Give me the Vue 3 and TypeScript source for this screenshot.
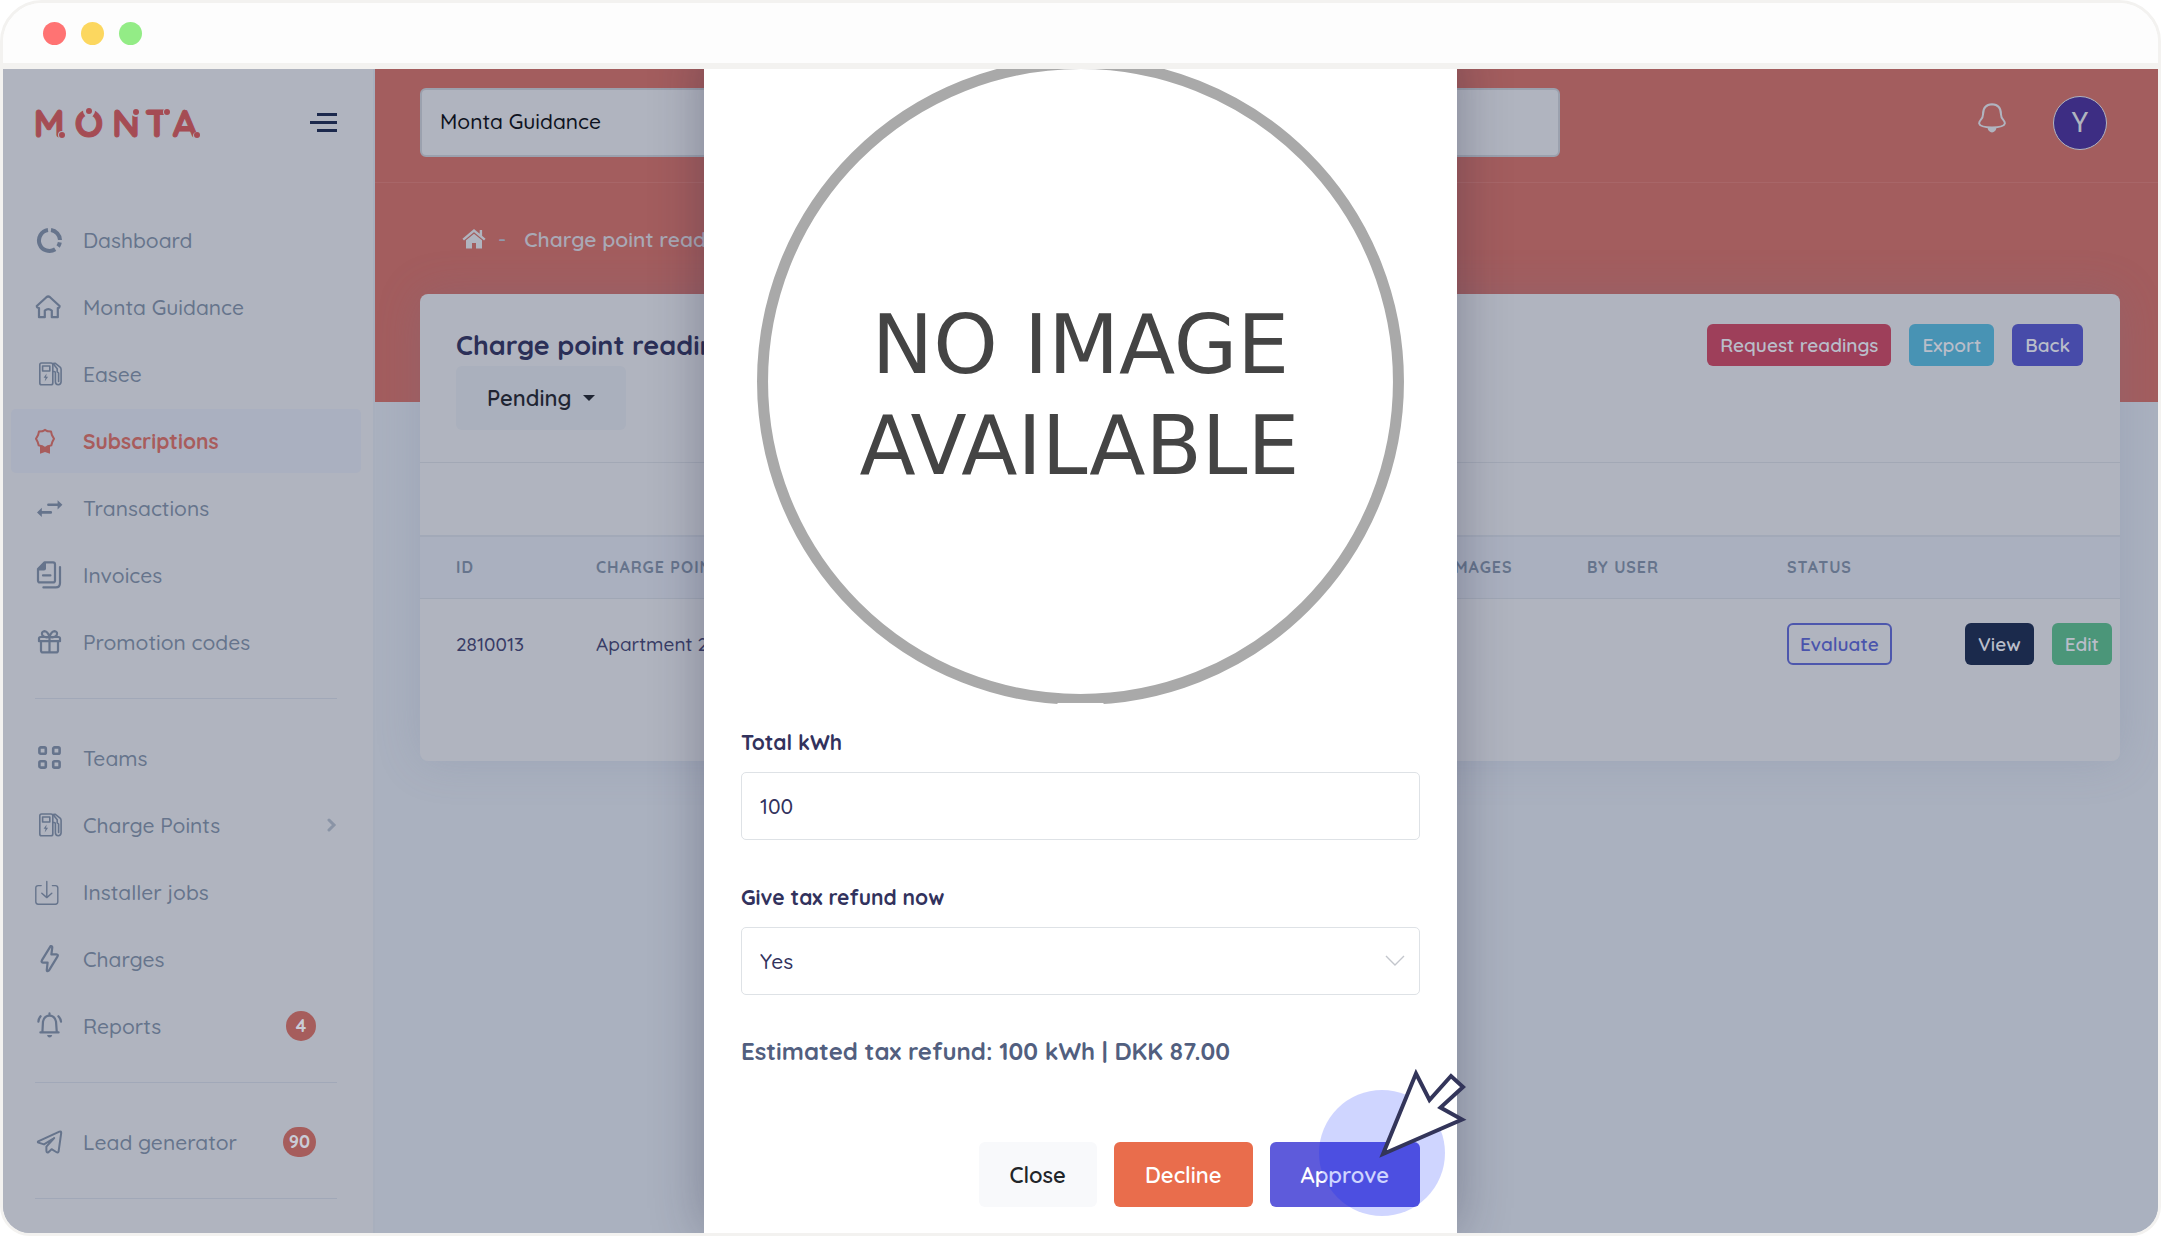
<script setup lang="ts">
import { ref } from 'vue'

interface NavItem {
  label: string
  icon: string
  active?: boolean
  badge?: number
  expandable?: boolean
}

const charger =
  '<rect x="4.8" y="3" width="13" height="21.8" rx="1.8"/><rect x="7.6" y="6" width="7.2" height="5"/>' +
  '<path d="M11.6 13.6 8.6 17.8h2l-.9 3.6 3.4-4.6h-2z" fill="currentColor" stroke="none"/>' +
  '<path d="M17.8 11.5h1.4q1.2 0 1.2 1.6v8.7q0 2.9 2.8 2.9t2.9-2.9V9.4q0-1.3-1-2.2L20 3.2l-2 .4 4.2 5.2v3l1.4 1.2v8.4"/>'

const icons: Record<string, string> = {
  dashboard:
    '<path stroke-width="4" stroke-linecap="butt" d="M16 4.1A10.5 10.5 0 0 1 25 14M24.8 16.3A10.5 10.5 0 0 1 23.1 20.5M20.2 23.3A10.5 10.5 0 1 1 13 4.1"/>',
  home:
    '<path stroke-width="2.2" d="M1.8 13 11.4 4.2Q13.2 2.8 15 4.2L24.6 13Q24.6 15 22.8 15V24.2H16.8V17.6Q13.2 14.8 9.8 17.6V24.2H4V15Q1.8 15 1.8 13Z"/>',
  charger,
  ribbon:
    '<path stroke-width="2" d="M10 2.8 12.6 4.3 16 4.6 16.9 8 19 11.8 17.3 15 16.3 18.4 13 19.2 10 21 7 19.2 3.7 18.4 2.7 15 1 11.8 3.1 8 4 4.6 7.4 4.3Z"/><path stroke="none" fill="currentColor" d="M5 18.6q5 3 10 0v8.2l-5-1.8-5 1.8z"/>',
  transfer:
    '<path stroke-width="2.6" d="M13.4 10.8H24M5 18.4H15.8"/><path stroke="none" fill="currentColor" d="M22.6 6.2 27.4 10.8 22.6 15.4ZM6.8 13.8 2 18.4 6.8 23Z"/>',
  invoice:
    '<path stroke-width="2.2" d="M9.6 1.4H18Q20 1.4 20 3.4V19.4Q20 21.4 18 21.4H5Q3 21.4 3 19.4V8ZM8 14.4H15.4M25 6V22Q25 26.4 20.8 26.4H8.4"/><path stroke="none" fill="currentColor" d="M3 9.6V7.4L9 1.4H11V7.6Q11 9.6 9 9.6Z"/>',
  gift:
    '<path stroke-width="2.2" d="M5.6 9H23.4Q25 9 25 10.6V13.2H4V10.6Q4 9 5.6 9ZM6 13.4V22.4Q6 24.4 8 24.4H21Q23 24.4 23 22.4V13.4M14.5 9V24.4M14.5 9Q9 10 7.4 7.4 6 4 9 3.2 12.6 3 14.5 9 16.4 3 20 3.2 23 4 21.6 7.4 20 10 14.5 9"/>',
  grid:
    '<g stroke-width="2.6"><rect x="4.4" y="3.4" width="6.4" height="6.4" rx="1.4"/><rect x="18.2" y="3.4" width="6.4" height="6.4" rx="1.4"/><rect x="4.4" y="17.2" width="6.4" height="6.4" rx="1.4"/><rect x="18.2" y="17.2" width="6.4" height="6.4" rx="1.4"/></g>',
  install:
    '<path stroke-width="1.4" d="M6.2 7.6H3.2Q.8 7.6 .8 10V23.8Q.8 26.2 3.2 26.2H20.4Q22.8 26.2 22.8 23.8V10Q22.8 7.6 20.4 7.6H17.4M11.8 3.4V19.4M6.8 15.2 11.8 19.6 16.8 15.2"/>',
  bolt:
    '<path stroke-width="2.2" d="M15.6 1.2Q17.6.8 17.2 3L16.4 9.4H21.4Q23.6 9.6 22.4 11.6L14 25.4Q11.6 27.2 11.8 24.8L12.6 17.6H8Q5.8 17.4 7 15.2Z"/>',
  alarm:
    '<path stroke-width="2.2" d="M7.4 20.4 8 9.4Q9.4 3.6 14.5 3.6T21 9.4L21.8 20.4M5.4 20.4H23.6M14.5 1.4V3.4M5.6 4.2Q3.6 6.4 3.4 9.6M23.4 4.2Q25.6 6.4 26 9.6"/><path stroke="none" fill="currentColor" d="M12 23H17.2Q16.6 25.6 14.6 25.6T12 23Z"/>',
  plane:
    '<path stroke-width="2" d="M3.2 13.4 24.4 3.6Q26.4 3 26.2 5L23.6 23.4Q23 25.2 21.2 24L16.6 21.2 13.4 24.2Q11.4 25 11.4 22.6V18.6L19.2 10 9 16.4 3.4 14.6Q2.4 14 3.2 13.4Z"/>',
}

const groups: NavItem[][] = [
  [
    { label: 'Dashboard', icon: 'dashboard' },
    { label: 'Monta Guidance', icon: 'home' },
    { label: 'Easee', icon: 'charger' },
    { label: 'Subscriptions', icon: 'ribbon', active: true },
    { label: 'Transactions', icon: 'transfer' },
    { label: 'Invoices', icon: 'invoice' },
    { label: 'Promotion codes', icon: 'gift' },
  ],
  [
    { label: 'Teams', icon: 'grid' },
    { label: 'Charge Points', icon: 'charger', expandable: true },
    { label: 'Installer jobs', icon: 'install' },
    { label: 'Charges', icon: 'bolt' },
    { label: 'Reports', icon: 'alarm', badge: 4 },
  ],
  [{ label: 'Lead generator', icon: 'plane', badge: 90 }],
]

const search = ref('Monta Guidance')
const totalKwh = ref('100')
const refund = ref('Yes')
</script>

<template>
  <div class="window">
    <div class="titlebar">
      <span class="dot red"></span>
      <span class="dot yellow"></span>
      <span class="dot green"></span>
    </div>

    <div class="app">
      <aside class="sidebar">
        <div class="brand">
          <svg class="logo" width="176" height="56" viewBox="-3 -14 176 56" role="img" aria-label="Monta">
            <g class="logo-text">
              <text x="15" y="28">M</text>
              <text x="55" y="28">O</text>
              <text x="92" y="28">N</text>
              <text x="123" y="28">T</text>
              <text x="151" y="28">A</text>
            </g>
            <g class="logo-cut">
              <circle cx="28" cy="26" r="4" />
              <circle cx="55" cy="2" r="6" />
              <circle cx="102" cy="3" r="5" />
              <circle cx="133" cy="3" r="4" />
              <circle cx="163" cy="27" r="4" />
            </g>
            <g class="logo-dot">
              <circle cx="28" cy="26" r="3" />
              <circle cx="55" cy="2" r="3" />
              <circle cx="102" cy="3" r="3" />
              <circle cx="133" cy="3" r="3" />
              <circle cx="163" cy="26" r="3" />
            </g>
          </svg>
          <button class="burger" aria-label="Toggle menu"><i></i><i></i><i></i></button>
        </div>
        <nav>
          <ul v-for="(group, g) in groups" :key="g">
            <li v-for="item in group" :key="item.label">
              <a href="#" :class="{ active: item.active }">
                <svg class="icon" width="28" height="28" viewBox="0 0 28 28" v-html="icons[item.icon]"></svg>
                <span class="label">{{ item.label }}</span>
                <span v-if="item.badge" class="badge">{{ item.badge }}</span>
                <svg v-if="item.expandable" class="chevron" width="10" height="14" viewBox="0 0 10 14">
                  <path d="M2 2 7 7 2 12" />
                </svg>
              </a>
            </li>
          </ul>
        </nav>
      </aside>

      <main class="content">
        <header class="topbar">
          <input v-model="search" class="search" type="text" aria-label="Team" />
          <div class="user">
            <svg width="28" height="30" viewBox="0 0 28 30" class="bell">
              <path d="M14 1.2Q5 1.4 5 11.4 5 14.8 2.4 17.4 1 19 1.2 20.6 2 24.2 14 24.4 26 24.2 26.8 20.6 27 19 25.6 17.4 23 14.8 23 11.4 23 1.4 14 1.2Z" />
              <path class="clapper" d="M9.4 24.6H18.6Q17.6 29.4 14 29.4T9.4 24.6Z" />
            </svg>
            <button class="avatar">Y</button>
          </div>
        </header>

        <div class="crumbs">
          <a href="#" aria-label="Home">
            <svg width="24" height="20" viewBox="0 0 24 20">
              <path class="roof" d="M1.2 10.6 12 1.6 22.8 10.6M18.9 1V7" />
              <path class="house" d="M4 11.2 12 4.8 20 11.2V19.4H14V14H10V19.4H4Z" />
            </svg>
          </a>
          <span class="sep">-</span>
          <a href="#" class="here">Charge point readings</a>
        </div>

        <section class="card">
          <div class="card-head">
            <div>
              <h1>Charge point readings</h1>
              <button class="pending">Pending <i class="caret"></i></button>
            </div>
            <div class="actions">
              <button class="btn danger">Request readings</button>
              <button class="btn info">Export</button>
              <button class="btn primary">Back</button>
            </div>
          </div>
          <div class="filters"></div>
          <table>
            <colgroup>
              <col class="c-id" />
              <col />
              <col class="c-images" />
              <col class="c-user" />
              <col class="c-status" />
              <col class="c-actions" />
            </colgroup>
            <thead>
              <tr>
                <th>ID</th>
                <th>Charge point</th>
                <th>Images</th>
                <th>By user</th>
                <th>Status</th>
                <th></th>
              </tr>
            </thead>
            <tbody>
              <tr>
                <td>2810013</td>
                <td>Apartment 2</td>
                <td></td>
                <td></td>
                <td><button class="btn outline">Evaluate</button></td>
                <td>
                  <div class="row-actions">
                    <button class="btn dark">View</button>
                    <button class="btn success">Edit</button>
                  </div>
                </td>
              </tr>
            </tbody>
          </table>
        </section>
      </main>

      <div class="overlay">
        <form class="dialog" role="dialog" aria-label="Evaluate reading" @submit.prevent>
          <svg class="placeholder" viewBox="0 0 678 678">
            <circle cx="339" cy="339" r="317.5" />
            <rect x="316" y="660" width="46" height="12" />
            <text x="339" y="331">NO IMAGE</text>
            <text x="338" y="431">AVAILABLE</text>
          </svg>

          <label for="kwh">Total kWh</label>
          <input id="kwh" v-model="totalKwh" class="field" type="text" />

          <label for="refund" class="next">Give tax refund now</label>
          <div class="select">
            <select id="refund" v-model="refund" class="field">
              <option>Yes</option>
              <option>No</option>
            </select>
            <svg width="20" height="12" viewBox="0 0 20 12"><path d="M1 1 10 10 19 1" /></svg>
          </div>

          <p class="estimate">Estimated tax refund: 100 kWh | DKK 87.00</p>

          <div class="dialog-actions">
            <button type="button" class="big light">Close</button>
            <button type="button" class="big orange">Decline</button>
            <div class="approve">
              <button type="submit" class="big violet">Approve</button>
              <svg class="pointer" width="150" height="150" viewBox="0 0 150 150">
                <circle cx="63" cy="85" r="63" />
                <path d="M64 86 97 5.500 110.500 32 132 8 144 19 121.500 39.500 143 51.500Z" />
              </svg>
            </div>
          </div>
        </form>
      </div>
    </div>
  </div>
</template>

<style>
body {
  margin: 0;
  background: #fff;
}
</style>

<style scoped>
* {
  box-sizing: border-box;
}
.window {
  display: flex;
  flex-direction: column;
  height: 100vh;
  border: 3px solid #f3f2f0;
  border-radius: 42px 42px 30px 30px;
  overflow: hidden;
  font-family: Quicksand, Lato, sans-serif;
  font-size: 21px;
  font-weight: 500;
  color: #32325d;
}
button,
input,
select {
  font: inherit;
  margin: 0;
}
a {
  text-decoration: none;
}
.titlebar {
  flex: none;
  display: flex;
  align-items: center;
  gap: 15px;
  height: 66px;
  padding-left: 40px;
  background: #fdfdfd;
  border-bottom: 6px solid #f3f2f0;
}
.dot {
  width: 23px;
  height: 23px;
  border-radius: 50%;
}
.red {
  background: #ff7373;
}
.yellow {
  background: #fcd75f;
}
.green {
  background: #93ec86;
}
.app {
  position: relative;
  flex: 1;
  min-height: 0;
  display: flex;
  background: #aab1bf;
}

/* sidebar */
.sidebar {
  flex: none;
  width: 372px;
  background: #b0b4bf;
  border-right: 2px solid #a8afbd;
}
.brand {
  display: flex;
  align-items: center;
  justify-content: space-between;
  height: 139px;
  padding: 0 36px 32px 28px;
}
.logo-text {
  font-size: 38px;
  font-weight: 700;
  fill: #a54c54;
  stroke: #a54c54;
  stroke-width: 1;
  text-anchor: middle;
}
.logo-cut {
  fill: #b0b4bf;
}
.logo-dot {
  fill: #a54c54;
}
.burger {
  display: flex;
  flex-direction: column;
  align-items: flex-end;
  gap: 5px;
  width: 27px;
  padding: 0;
  border: 0;
  background: none;
}
.burger i {
  width: 20px;
  height: 3px;
  background: #1c294d;
}
.burger i:nth-child(2) {
  width: 27px;
}
nav ul {
  display: flex;
  flex-direction: column;
  gap: 3px;
  margin: 0;
  padding: 0 8px;
  list-style: none;
}
nav ul::after {
  content: '';
  height: 1px;
  margin: 21px 28px 27px 24px;
  background: #a1a8b8;
}
nav a {
  display: flex;
  align-items: center;
  height: 64px;
  width: 350px;
  padding: 0 24px;
  border-radius: 5px;
  color: #66748c;
}
nav a.active {
  background: #aab0c0;
  color: #a85c5c;
  font-weight: 700;
}
.icon {
  flex: none;
  margin-right: 20px;
  fill: none;
  stroke: currentColor;
  stroke-width: 1.6;
  stroke-linecap: round;
  stroke-linejoin: round;
}
.label {
  flex: 1;
}
.badge {
  min-width: 30px;
  height: 30px;
  margin-right: 21px;
  padding: 0 6px;
  border-radius: 15px;
  background: #a65d5c;
  color: #c9ccd6;
  font-size: 18px;
  font-weight: 700;
  line-height: 30px;
  text-align: center;
}
.chevron {
  fill: none;
  stroke: #8a94a6;
  stroke-width: 3;
  stroke-linecap: round;
}

/* page */
.content {
  flex: 1;
  min-width: 0;
  padding: 0 38px 0 45px;
  background: linear-gradient(#a35d5e, #a35d5e) 0 0 / 100% 333px no-repeat #aab1bf;
}
.topbar {
  display: flex;
  justify-content: space-between;
  align-items: center;
  height: 114px;
  margin: 0 -38px 0 -45px;
  padding: 0 51px 6px 45px;
  border-bottom: 1px solid #a86668;
}
.search {
  width: 1140px;
  height: 69px;
  padding: 0 18px 4px;
  border: 2px solid #9ba1ae;
  border-radius: 6px;
  background: #b0b4bf;
  color: #0d1220;
}
.user {
  display: flex;
  align-items: center;
  gap: 47px;
}
.bell {
  margin-bottom: 9px;
  fill: none;
  stroke: #b0b4bf;
  stroke-width: 2;
}
.bell .clapper {
  fill: #b0b4bf;
  stroke: none;
}
.avatar {
  width: 54px;
  height: 54px;
  padding: 0;
  border: 1px solid #b0b4bf;
  border-radius: 50%;
  background: #3d2d83;
  color: #b0b4bf;
  font-family: Roboto, sans-serif;
  font-size: 28px;
  font-weight: 400;
}
.crumbs {
  display: flex;
  align-items: center;
  height: 111px;
  padding-left: 42px;
}
.crumbs svg {
  display: block;
}
.roof {
  fill: none;
  stroke: #b0b4bf;
  stroke-width: 2.4;
}
.house {
  fill: #b0b4bf;
}
.sep {
  margin: 0 18px 0 12px;
  color: #9199ac;
}
.here {
  color: #a9a9b6;
  font-weight: 600;
}
.card {
  height: 467px;
  border-radius: 8px;
  background: #b0b4bf;
  box-shadow: 0 0 46px rgba(100, 116, 150, 0.2);
  overflow: hidden;
}
.card-head {
  display: flex;
  justify-content: space-between;
  height: 168px;
  padding: 30px 37px 32px 36px;
}
h1 {
  margin: 0;
  font-size: 27px;
  line-height: 42px;
  font-weight: 700;
  color: #2b2f57;
}
.pending {
  display: flex;
  align-items: center;
  gap: 12px;
  height: 64px;
  padding: 0 31px;
  border: 0;
  border-radius: 6px;
  background: #aab0bd;
  color: #1f2533;
  font-size: 22px;
  font-weight: 600;
}
.caret {
  border: 6px solid transparent;
  border-top-color: #1f2533;
  border-bottom: 0;
}
.actions,
.row-actions {
  display: flex;
  gap: 18px;
}
.btn {
  height: 42px;
  padding: 0 13px;
  border: 0;
  border-radius: 6px;
  color: #b9bdc9;
  font-size: 19px;
  font-weight: 600;
}
.danger {
  background: #9e3f5a;
}
.info {
  background: #4893b4;
}
.primary {
  background: #474ba9;
}
.dark {
  background: #1b2a4c;
}
.success {
  background: #4b9679;
}
.outline {
  padding: 0 11px;
  border: 2px solid #4d57ad;
  background: none;
  color: #4a54ac;
}
.filters {
  height: 73px;
  border-top: 1px solid #a2a8b5;
}
table {
  width: 100%;
  table-layout: fixed;
  border-collapse: collapse;
}
.c-id {
  width: 176px;
}
.c-images {
  width: 138px;
}
.c-user {
  width: 200px;
}
.c-status {
  width: 178px;
}
.c-actions {
  width: 155px;
}
th {
  height: 62px;
  padding: 0;
  border-top: 2px solid #a2a9b8;
  border-bottom: 1px solid #a0a7b5;
  background: #aab0bf;
  color: #66748c;
  font-size: 16px;
  font-weight: 700;
  letter-spacing: 1px;
  text-align: left;
  text-transform: uppercase;
}
td {
  height: 92px;
  padding: 0;
  color: #383c66;
  font-size: 19px;
}
th:first-child,
td:first-child {
  padding-left: 36px;
}

/* dialog */
.overlay {
  position: absolute;
  inset: 0;
  display: flex;
  justify-content: center;
  align-items: flex-end;
  overflow: hidden;
}
.dialog {
  flex: none;
  width: 753px;
  padding: 0 37px 26px;
  background: #fff;
  box-shadow: 0 0 50px rgba(30, 30, 60, 0.32);
}
.placeholder {
  display: block;
  width: 100%;
  margin-bottom: 7px;
}
.placeholder circle {
  fill: none;
  stroke: #a9a9a9;
  stroke-width: 11;
}
.placeholder rect {
  fill: #fff;
}
.placeholder text {
  font-family: 'DejaVu Sans', sans-serif;
  font-size: 82px;
  font-weight: 400;
  fill: #444;
  text-anchor: middle;
}
label {
  display: block;
  margin-bottom: 16px;
  line-height: 28px;
  font-weight: 700;
}
label.next {
  margin-top: 43px;
}
.field {
  display: block;
  width: 100%;
  height: 68px;
  padding: 0 18px;
  border: 1px solid #dee2e6;
  border-radius: 5px;
  background: #fff;
  color: #32325d;
  appearance: none;
}
.select {
  position: relative;
}
.select svg {
  position: absolute;
  right: 15px;
  top: 28px;
  fill: none;
  stroke: #c3c6cc;
  stroke-width: 1.4;
  pointer-events: none;
}
.estimate {
  margin: 40px 0 75px;
  font-size: 24px;
  line-height: 32px;
  font-weight: 700;
  color: #525f7f;
}
.dialog-actions {
  display: flex;
  justify-content: flex-end;
  gap: 17px;
}
.big {
  height: 65px;
  padding: 0 31px;
  border: 0;
  border-radius: 6px;
  color: #fff;
  font-size: 22px;
  font-weight: 600;
}
.light {
  background: #f8f9fb;
  color: #212529;
}
.orange {
  background: #e96d4c;
}
.violet {
  background: #5e5bdb;
}
.approve {
  position: relative;
}
.pointer {
  position: absolute;
  right: -49px;
  top: -74px;
  pointer-events: none;
}
.pointer circle {
  fill: rgba(0, 32, 255, 0.19);
}
.pointer path {
  fill: #fff;
  stroke: #33355a;
  stroke-width: 4;
}
</style>
